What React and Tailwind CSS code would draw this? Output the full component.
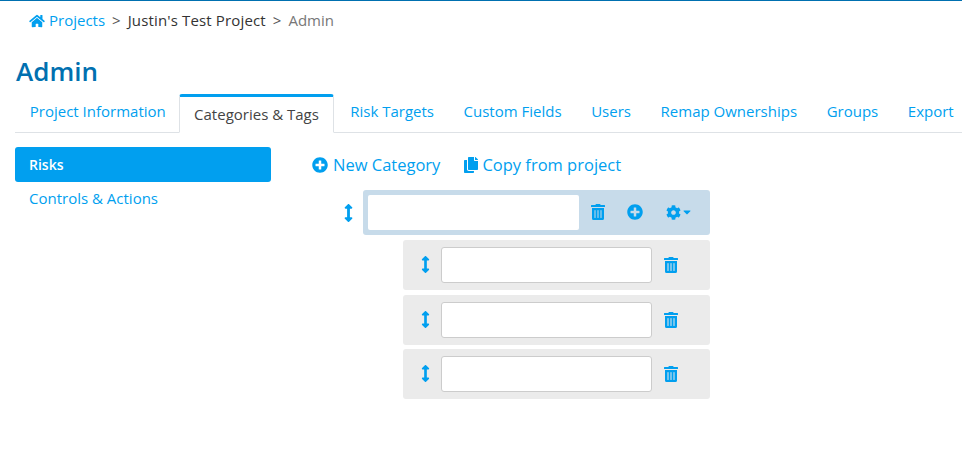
import React from "react";
import { FaHome, FaPlusCircle, FaCopy, FaTrashAlt, FaArrowsAltV, FaCog, FaCaretDown } from "react-icons/fa";

const tabs = [
  ["Project Information", false],
  ["Categories & Tags", true],
  ["Risk Targets", false],
  ["Custom Fields", false],
  ["Users", false],
  ["Remap Ownerships", false],
  ["Groups", false],
  ["Export", false],
];

function ChildRow() {
  return (
    <div className="flex items-center h-[50px] w-[307px] bg-[#ebebeb] rounded-[3px] pl-[15px]">
      <FaArrowsAltV className="w-[15px] h-[17px] -mt-[1px] text-[#019fef]" />
      <input className="ml-[8px] w-[211px] h-[36px] bg-white border border-[#cccccc] rounded-[3px]" />
      <FaTrashAlt className="ml-[12px] w-[14px] h-[16px] text-[#019fef]" />
    </div>
  );
}

export default function App() {
  return (
    <div className="w-[962px] h-[458px] overflow-hidden bg-white border-t border-[#0070b0] text-[15px] text-[#019fef] font-['Open_Sans','Noto_Sans',sans-serif]">
      <div className="flex items-center h-[39px] pl-[29px] text-[15px]">
        <FaHome className="w-[16px] h-[14px]" />
        <span className="ml-[4px]">Projects</span>
        <span className="ml-[7px] text-[#555555]">&gt;</span>
        <span className="ml-[7px] text-[#333333] tracking-[0.15px]">Justin's Test Project</span>
        <span className="ml-[7px] text-[#555555]">&gt;</span>
        <span className="ml-[7px] text-[#777777]">Admin</span>
      </div>
      <h1 className="mt-[14px] ml-[16px] h-[40px] leading-[34px] text-[26px] font-semibold text-[#0070b0]">Admin</h1>
      <div className="flex items-end h-[39px] ml-[15px] border-b border-[#dee2e6] text-[15px]">
        {tabs.map(([t, active]) =>
          active ? (
            <div key={t} className="relative top-px h-[39px] px-[14px] -ml-[1.5px] mr-[1.5px] pt-[6px] bg-white border border-[#dee2e6] border-b-white border-t-[3px] border-t-[#019fef] rounded-t-[3px] text-[#444444] whitespace-nowrap">
              {t}
            </div>
          ) : (
            <div key={t} className="h-[38px] px-[14.8px] pt-[6px] whitespace-nowrap">{t}</div>
          )
        )}
      </div>
      <div className="flex">
        <div className="ml-[15px] mt-[14px] w-[256px] text-[15px]">
          <div className="flex items-center h-[35px] pl-[14px] bg-[#019fef] rounded-[3px] text-white font-semibold text-[14px]">Risks</div>
          <div className="flex items-center h-[33px] pl-[14px]">Controls &amp; Actions</div>
        </div>
        <div className="ml-[41px]">
          <div className="flex items-center h-[35px] mt-[14px] text-[16.5px]">
            <FaPlusCircle className="w-[16px] h-[16px]" />
            <span className="ml-[5px] pt-[2px]">New Category</span>
            <FaCopy className="ml-[24px] w-[14px] h-[16px]" />
            <span className="ml-[4px] pt-[2px]">Copy from project</span>
          </div>
          <div className="mt-[8px] flex flex-col items-start">
            <div className="flex items-center">
              <FaArrowsAltV className="ml-[29px] w-[15px] h-[18px]" />
              <div className="ml-[7px] flex items-center w-[347px] h-[45px] bg-[#c7dbea] rounded-[3px] pl-[5px]">
                <input className="w-[211px] h-[35px] bg-white rounded-[2px]" />
                <FaTrashAlt className="ml-[12px] w-[14px] h-[16px] -mt-[1px]" />
                <FaPlusCircle className="ml-[22px] w-[16px] h-[16px] -mt-[1px]" />
                <FaCog className="ml-[23px] w-[15px] h-[15px] -mt-[1px]" />
                <FaCaretDown className="ml-[0px] w-[12px] h-[12px] -mt-[2px]" />
              </div>
            </div>
            <div className="ml-[91px] mt-[5px] flex flex-col gap-[4.5px]">
              <ChildRow />
              <ChildRow />
              <ChildRow />
            </div>
          </div>
        </div>
      </div>
    </div>
  );
}
